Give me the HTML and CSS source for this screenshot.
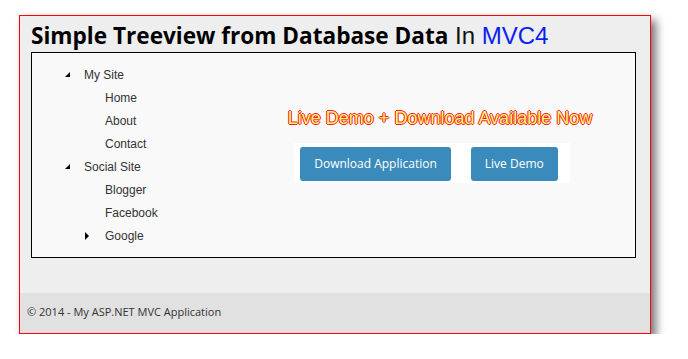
FILE: index.html
```html
<!DOCTYPE html>
<html lang="en">
<head>
    <meta charset="UTF-8">
    <title>Simple Treeview from Database Data In MVC4</title>
    <link rel="stylesheet" href="styles.css">
</head>
<body>
    <div class="frame">
        <div class="page">
            <h1><b>Simple Treeview from Database Data</b> In <span class="mvc">MVC4</span></h1>

            <div class="panel">
                <ul class="tree">
                    <li class="open"><span class="arrow down"></span>My Site</li>
                    <li class="leaf">Home</li>
                    <li class="leaf">About</li>
                    <li class="leaf">Contact</li>
                    <li class="open"><span class="arrow down"></span>Social Site</li>
                    <li class="leaf">Blogger</li>
                    <li class="leaf">Facebook</li>
                    <li class="leaf closed"><span class="arrow right"></span>Google</li>
                </ul>

                <div class="promo">
                    <div class="live">Live Demo + Download Available Now</div>
                    <div class="buttons">
                        <a class="btn" href="#">Download Application</a>
                        <a class="btn" href="#">Live Demo</a>
                    </div>
                </div>
            </div>
        </div>

        <footer>
            <p>&copy; 2014 - My ASP.NET MVC Application</p>
        </footer>
    </div>
</body>
</html>
```

FILE: styles.css
```css
* {
    margin: 0;
    padding: 0;
    box-sizing: border-box;
}

body {
    background-color: white;
    font-family: 'Liberation Sans', Arial, sans-serif;
    padding: 15px 0 0 19px;
}

.frame {
    width: 632px;
    height: 319px;
    border: 1px solid #ff0000;
    background-color: #eeeeee;
    box-shadow: 5px 5px 9px rgba(0,0,0,0.55);
    display: flex;
    flex-direction: column;
}

.page {
    padding: 0 14px 0 11px;
    flex: 1;
}

h1 {
    height: 36px;
    padding-top: 5px;
    font-size: 24px;
    font-weight: normal;
    color: #111;
    line-height: 30px;
    white-space: nowrap;
}

h1 b {
    font-family: 'Open Sans', sans-serif;
    font-weight: bold;
    font-size: 22.6px;
    color: black;
}

.mvc {
    color: #0b1ff0;
}

.panel {
    border: 1px solid black;
    background-color: #f9f9f9;
    height: 206px;
    display: flex;
}

.tree {
    list-style: none;
    width: 209px;
    padding: 11px 0 0 52px;
    font-size: 12px;
    color: #333;
}

.tree li {
    height: 23px;
    line-height: 23px;
    position: relative;
}

.tree li.leaf {
    padding-left: 21px;
}

.arrow {
    position: absolute;
    width: 0;
    height: 0;
}

.arrow.down {
    left: -19px;
    top: 8px;
    border-left: 5px solid transparent;
    border-bottom: 5px solid black;
}

.arrow.right {
    left: 1px;
    top: 7px;
    border-top: 4px solid transparent;
    border-bottom: 4px solid transparent;
    border-left: 4px solid black;
}

.promo {
    flex: 1;
    display: flex;
    flex-direction: column;
    align-items: center;
    padding-top: 54px;
}

.live {
    font-size: 18px;
    color: #f4f47a;
    margin-left: 4px;
    text-shadow: 1px 0 0 #ff1a1a, -1px 0 0 #ff1a1a, 0 1px 0 #ff1a1a, 0 -1px 0 #ff1a1a;
    line-height: 22px;
}

.buttons {
    margin-top: 14px;
    margin-right: 12px;
    background-color: white;
    padding: 4px 12px 2px 6px;
    display: flex;
    gap: 20px;
}

.btn {
    display: block;
    height: 34px;
    line-height: 34px;
    padding: 0 14px;
    background-color: #3a8bbb;
    color: white;
    text-decoration: none;
    font-family: 'Open Sans', sans-serif;
    font-size: 12px;
    border-radius: 3px;
}

footer {
    height: 40px;
    background-color: #e1e1e1;
    padding: 0 0 4px 7px;
    display: flex;
    align-items: center;
}

footer p {
    font-family: 'Open Sans', sans-serif;
    font-size: 11px;
    color: #333;
}
```
